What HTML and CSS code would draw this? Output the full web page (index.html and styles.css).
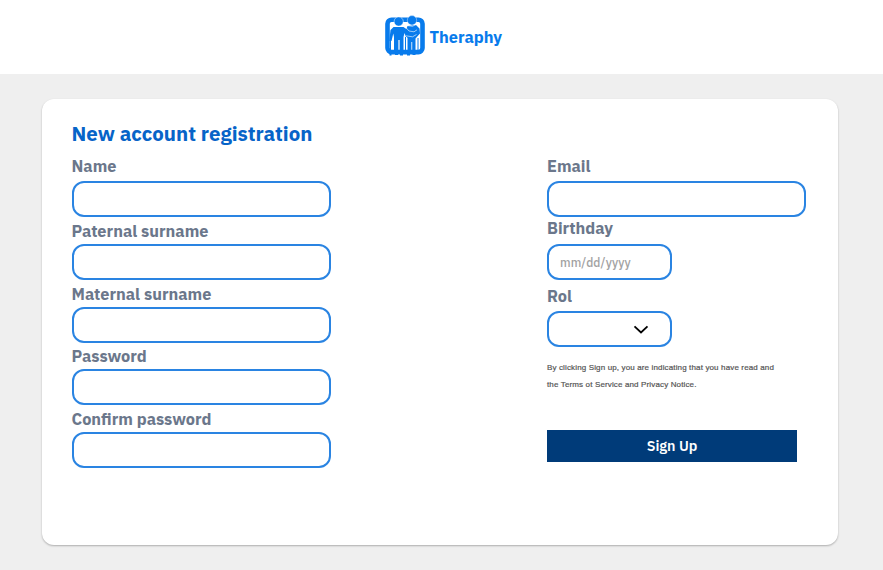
FILE: index.html
```html
<!DOCTYPE html>
<html lang="en">
<head>
<meta charset="utf-8">
<title>Theraphy</title>
<link rel="stylesheet" href="styles.css">
</head>
<body>
<header class="header">
  <svg class="logo" viewBox="0 0 40 42" aria-hidden="true">
    <rect x="2.500" y="4.700" width="35" height="32.400" rx="4" fill="none" stroke="currentColor" stroke-width="4.600"/>
    <g fill="currentColor">
      <circle cx="13.700" cy="6.500" r="4.600" stroke="#fff" stroke-width=".5"/>
      <circle cx="27" cy="5.300" r="4.700" stroke="#fff" stroke-width=".4"/>
      <path d="M8.500 12h10l3.500 2.500 1 7-2 .5-1.500-4-1 4v16h-3.900V25h-1.200v13H9V22l-.7-3.500L6.500 26H4.300L5.500 15z"/>
      <path d="M22.500 11 31 10l3.500 3.500.5 5-4.500 5V37h-3.300V27h-.8v10h-3.900V23l-1.500-2V15z"/>
      <path d="M4.500 38h2v2.500h-2zM10 38h3v2h-3zM15 38h3v2.500h-3zM22 38h3v2.500h-3zM27.500 38h3v2h-3z"/>
    </g>
    <path d="M20 11.500 24 16l5 .8 3-2M21 20.800l6.500 1 4-2.300M22.500 10.600l5 .7 4-2" fill="none" stroke="#fff" stroke-width=".6"/>
    <path d="M5.500 22v15M20.500 22v15M33 23v14" stroke="currentColor" stroke-width="1"/>
  </svg>
  <span class="brand">Theraphy</span>
</header>
<main class="page">
  <form class="card">
    <h1 class="title">New account registration</h1>
    <div class="columns">
      <div class="column">
        <label class="label first name" for="name">Name</label>
        <input class="field" id="name">
        <label class="label" for="paternal">Paternal surname</label>
        <input class="field" id="paternal">
        <label class="label" for="maternal">Maternal surname</label>
        <input class="field" id="maternal">
        <label class="label" for="password">Password</label>
        <input class="field" id="password" type="password">
        <label class="label" for="confirm">Confirm password</label>
        <input class="field" id="confirm" type="password">
      </div>
      <div class="column">
        <label class="label first" for="email">Email</label>
        <input class="field" id="email">
        <label class="label birthday" for="birthday">Birthday</label>
        <input class="field short" id="birthday" placeholder="mm/dd/yyyy">
        <label class="label rol" for="rol">Rol</label>
        <button class="field short select" id="rol" type="button" aria-label="Rol">
          <svg class="chevron" viewBox="0 0 16 10" aria-hidden="true"><path d="M1.500 2.300 8 8.500 14.500 2.300" fill="none" stroke="#000" stroke-width="1.800"/></svg>
        </button>
        <p class="terms"><span class="line-one">By clicking Sign up, you are indicating that you have read and</span><br><span class="line-two">the Terms ot Service and Privacy Notice.</span></p>
        <button class="submit" type="button">Sign Up</button>
      </div>
    </div>
  </form>
</main>
</body>
</html>
```
FILE: styles.css
```css
* { box-sizing: border-box; }
body {
  margin: 0;
  height: 570px;
  overflow: hidden;
  background: #efefef;
  font-family: "IBM Plex Sans", "Noto Sans", sans-serif;
}
.header {
  display: flex;
  justify-content: center;
  height: 74px;
  padding: 15px 0 0 4px;
  gap: 5px;
  background: #fff;
  color: #087bec;
}
.logo { width: 40px; height: 42px; flex: none; }
.brand {
  width: 73px;
  font-size: 16.400px;
  font-weight: 700;
  line-height: 44px;
  white-space: nowrap;
}
.page { padding: 25px 45px 0 41.500px; }
.card {
  height: 446px;
  padding: 21px 30px 0;
  border-radius: 12px;
  background: #fff;
  box-shadow: 0 1px 2px rgba(0, 0, 0, .28);
}
.title {
  margin: 0;
  height: 35px;
  font-size: 20.450px;
  font-weight: 700;
  line-height: 28px;
  color: #0764c8;
  white-space: nowrap;
}
.columns { display: flex; justify-content: space-between; }
.column { display: flex; flex-direction: column; align-items: flex-start; width: 259px; }
.column + .column { margin-right: 2px; }
.label {
  height: 24px;
  margin-top: 2.800px;
  font-size: 16.350px;
  font-weight: 700;
  line-height: 22px;
  color: #6b778b;
  white-space: nowrap;
}
.label.first { height: 26px; margin-top: 0; }
.label.birthday { height: 26px; margin-top: 1px; line-height: 20px; }
.label.rol { height: 26px; margin-top: 5px; }
.field {
  display: block;
  width: 259px;
  height: 36px;
  padding: 0 11px;
  border: 2px solid #2a84e2;
  border-radius: 12px;
  background: #fff;
  font: 500 12px "IBM Plex Sans", "Noto Sans", sans-serif;
  letter-spacing: .1px;
  outline: none;
}
.field::placeholder { color: #a2a2a2; opacity: 1; }
.short { width: 125px; }
.select { display: flex; align-items: center; justify-content: flex-end; padding-right: 21px; }
.chevron { width: 16px; height: 10px; }
.terms {
  margin: 13px 0 0;
  font: 8px/16.500px "Liberation Sans", sans-serif;
  color: #555;
  -webkit-text-stroke: .2px #555;
  letter-spacing: .14px;
  white-space: nowrap;
}
.submit {
  width: 250px;
  height: 32px;
  margin-top: 37px;
  padding: 0 0 1px;
  border: 0;
  background: #003b79;
  color: #fff;
  font: 600 14.300px "IBM Plex Sans", "Noto Sans", sans-serif;
}
```
